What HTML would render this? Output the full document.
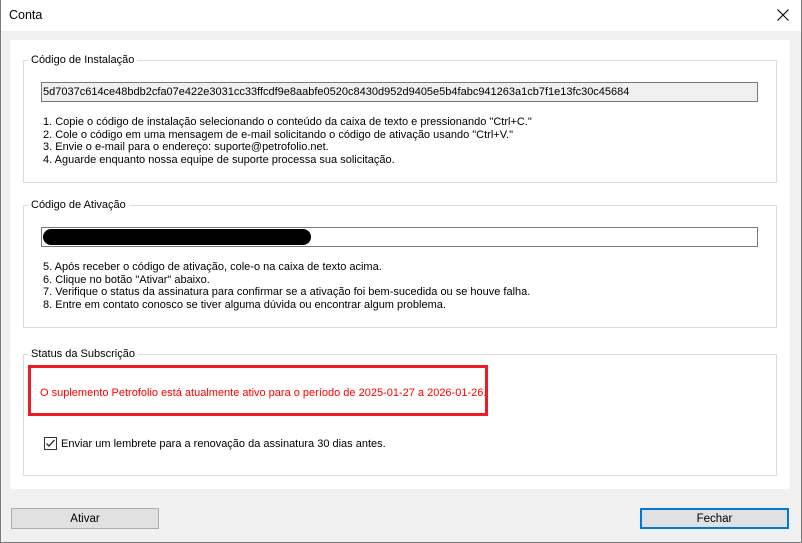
<!DOCTYPE html>
<html><head><meta charset="utf-8"><style>
*{margin:0;padding:0;box-sizing:border-box}
body{width:802px;height:543px;overflow:hidden;background:#f0f0f0;font-family:"Liberation Sans",sans-serif;font-size:11px;color:#000;position:relative}
.a{position:absolute}
.win{left:0;top:0;width:802px;height:543px;border:1px solid #7a7a7a;border-top:none}
.title{left:1px;top:0;width:800px;height:31px;background:#fff}
.panel{left:10px;top:40px;width:780px;height:449px;background:#fff}
.grp{border:1px solid #dcdcdc}
.leg{background:#fff;padding:0 3px;white-space:nowrap}
.tb{border:1px solid #7a7a7a;height:20px;padding:3px 0 0 1px;white-space:nowrap;overflow:hidden;letter-spacing:0}
.txt{line-height:12.7px;white-space:nowrap}
.btn{background:#e1e1e1;border:1px solid #adadad;text-align:center;line-height:20px;font-size:11.5px}
</style></head><body>
<div class="a title"></div>
<div class="a" style="left:9px;top:8px;font-size:12.5px">Conta</div>
<svg class="a" style="left:776px;top:8px" width="14" height="14"><path d="M1.5 1.5L12.5 12.5M12.5 1.5L1.5 12.5" stroke="#000" stroke-width="1.1"/></svg>
<div class="a panel"></div>

<div class="a grp" style="left:23px;top:60px;width:754px;height:123px"></div>
<div class="a leg" style="left:28px;top:54px">Código de Instalação</div>
<div class="a tb" style="left:41px;top:82px;width:717px;background:#f0f0f0">5d7037c614ce48bdb2cfa07e422e3031cc33ffcdf9e8aabfe0520c8430d952d9405e5b4fabc941263a1cb7f1e13fc30c45684</div>
<div class="a txt" style="left:43px;top:116px">1. Copie o código de instalação selecionando o conteúdo da caixa de texto e pressionando "Ctrl+C."<br>2. Cole o código em uma mensagem de e-mail solicitando o código de ativação usando "Ctrl+V."<br>3. Envie o e-mail para o endereço: suporte@petrofolio.net.<br>4. Aguarde enquanto nossa equipe de suporte processa sua solicitação.</div>

<div class="a grp" style="left:23px;top:205px;width:754px;height:123px"></div>
<div class="a leg" style="left:28px;top:199px">Código de Ativação</div>
<div class="a tb" style="left:41px;top:227px;width:717px;background:#fff"></div>
<div class="a" style="left:43px;top:229px;width:268px;height:16px;background:#000;border-radius:8px"></div>
<div class="a txt" style="left:43px;top:261px">5. Após receber o código de ativação, cole-o na caixa de texto acima.<br>6. Clique no botão "Ativar" abaixo.<br>7. Verifique o status da assinatura para confirmar se a ativação foi bem-sucedida ou se houve falha.<br>8. Entre em contato conosco se tiver alguma dúvida ou encontrar algum problema.</div>

<div class="a grp" style="left:23px;top:354px;width:754px;height:122px"></div>
<div class="a leg" style="left:28px;top:348px">Status da Subscrição</div>
<div class="a" style="left:28px;top:365px;width:460px;height:51px;border:3px solid #ed1c24"></div>
<div class="a" style="left:40px;top:387px;color:#ff0000;white-space:nowrap;font-size:11px">O suplemento Petrofolio está atualmente ativo para o período de 2025-01-27 a 2026-01-26.</div>
<div class="a" style="left:44px;top:437px;width:13px;height:13px;border:1px solid #333;background:#fff"></div>
<svg class="a" style="left:44px;top:437px" width="13" height="13"><path d="M2.5 6.5L5 9L10.5 3" stroke="#333" stroke-width="1.3" fill="none"/></svg>
<div class="a" style="left:61px;top:438px;white-space:nowrap">Enviar um lembrete para a renovação da assinatura 30 dias antes.</div>

<div class="a btn" style="left:11px;top:508px;width:148px;height:21px">Ativar</div>
<div class="a btn" style="left:640px;top:508px;width:149px;height:21px;border:2px solid #0078d7;line-height:18px">Fechar</div>
<div class="a win"></div>
</body></html>
